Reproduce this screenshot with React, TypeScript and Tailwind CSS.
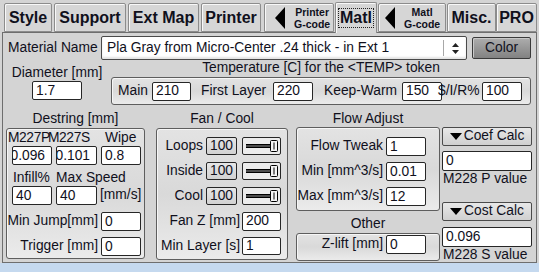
import React from "react";

const boxCls =
  "rounded-[3px] border border-[#5e5e5e] bg-linear-to-b from-[#e3e3e3] via-[#d9d9d9] to-[#ebebeb] shadow-[inset_1px_1px_0_#f6f6f6]";

function Field({ className = "", children, clip = false }: { className?: string; children: React.ReactNode; clip?: boolean }) {
  return (
    <div
      className={`flex shrink-0 items-center overflow-hidden rounded-[2px] border border-[#262626] bg-white ${
        clip ? "justify-end pr-[6px]" : "pl-[3px]"
      } ${className}`}
    >
      <span className="whitespace-nowrap leading-none">{children}</span>
    </div>
  );
}

function LeftTri() {
  return (
    <svg width="10" height="22" viewBox="0 0 10 22" className="shrink-0">
      <polygon points="10,0 10,22 0,11" fill="#000" />
    </svg>
  );
}

function Tab({ className = "", children, selected = false }: { className?: string; children: React.ReactNode; selected?: boolean }) {
  return (
    <div
      className={`flex shrink-0 items-center justify-center rounded-t-[2px] border border-[#8c8c8c] bg-[#d6d6d6] shadow-[inset_1px_1px_0_#f8f8f8] ${
        selected ? "relative z-10 mb-[-1px] h-[31px] border-b-0 border-[#6e6e6e] bg-[#d4d4d4]" : "h-[29px]"
      } ${className}`}
    >
      {children}
    </div>
  );
}

function Slider() {
  return (
    <div className="flex h-[18px] w-[39px] shrink-0 items-center rounded-[2px] border border-[#262626] bg-[#ececec]">
      <svg width="37" height="16" viewBox="0 0 37 16">
        <rect x="3" y="6" width="25" height="4" fill="#000" />
        <rect x="3" y="7.5" width="25" height="1" fill="#9a9a9a" />
        <rect x="27.5" y="2.5" width="7" height="11" rx="1" fill="#f4f4f4" stroke="#000" />
        <rect x="30.5" y="4.5" width="1" height="7" fill="#000" />
      </svg>
    </div>
  );
}

function Hundred() {
  return (
    <div className="flex h-[18px] w-[31px] shrink-0 items-center justify-center rounded-[2px] border border-[#262626] bg-linear-to-b from-[#e6e6e6] to-[#d2d2d2] leading-none">
      100
    </div>
  );
}

function DownTri() {
  return (
    <svg width="12" height="7" viewBox="0 0 12 7" className="mr-[2px] shrink-0">
      <polygon points="0,0 12,0 6,7" fill="#000" />
    </svg>
  );
}

export default function App() {
  return (
    <div className="flex h-[272px] w-[539px] flex-col overflow-hidden bg-[#d4d4d4] font-['Liberation_Sans',Arial,sans-serif] text-[13.8px] text-[#10101c]">
      {/* Tabs */}
      <div className="flex h-[32px] shrink-0 items-end text-[16px] font-bold">
        <Tab className="ml-[4px] w-[48px]">Style</Tab>
        <Tab className="ml-[2px] w-[72px]">Support</Tab>
        <Tab className="ml-[2px] w-[71px]">Ext Map</Tab>
        <Tab className="ml-[2px] w-[60px]">Printer</Tab>
        <Tab className="ml-[3px] w-[70px] justify-start pl-[10px]">
          <LeftTri />
          <div className="ml-[9px] flex flex-col items-center text-[10.5px] leading-[12px]">
            <span>Printer</span>
            <span>G-code</span>
          </div>
        </Tab>
        <Tab selected className="ml-[1px] w-[42px]">
          <span className="border border-dotted border-[#222] px-[1px] leading-[18px]">Matl</span>
        </Tab>
        <Tab className="ml-[1px] w-[68px] justify-start pl-[6px]">
          <LeftTri />
          <div className="ml-[9px] flex flex-col items-center text-[10.5px] leading-[12px]">
            <span>Matl</span>
            <span>G-code</span>
          </div>
        </Tab>
        <Tab className="ml-[1px] w-[49px]">Misc.</Tab>
        <Tab className="w-[41px]">PRO</Tab>
      </div>

      {/* Panel */}
      <div className="ml-[2px] flex h-[231px] w-[535px] shrink-0 flex-col border border-[#6e6e6e] bg-[#d4d4d4]">
        {/* Row 1 */}
        <div className="mt-[3px] flex h-[24px] items-center">
          <div className="w-[98px] shrink-0 pl-[5px] whitespace-nowrap">Material Name</div>
          <div className="flex h-[24px] w-[366px] shrink-0 items-center rounded-[2px] border border-[#4a4a4a] bg-white shadow-[inset_0_-2px_2px_#e4e4e4]">
            <div className="flex-1 pl-[5px] whitespace-nowrap">Pla Gray from Micro-Center .24 thick - in Ext 1</div>
            <div className="h-[16px] w-[1px] bg-[#a8a8a8]" />
            <div className="flex w-[22px] justify-center">
              <svg width="7" height="11" viewBox="0 0 7 11">
                <polygon points="3.5,0 7,4 0,4" fill="#222" />
                <polygon points="0,7 7,7 3.5,11" fill="#222" />
              </svg>
            </div>
          </div>
          <div className="ml-[5px] flex h-[22px] w-[59px] shrink-0 items-center justify-center rounded-[2px] border border-[#3a3a3a] bg-linear-to-b from-[#adadad] to-[#828282] shadow-[inset_1px_1px_0_#c8c8c8]">
            Color
          </div>
        </div>

        {/* Row 2 */}
        <div className="flex h-[45px]">
          <div className="flex w-[108px] shrink-0 flex-col items-center pt-[5px]">
            <div className="h-[16px] leading-[16px] whitespace-nowrap">Diameter [mm]</div>
            <Field className="h-[19px] w-[50px]">1.7</Field>
          </div>
          <div className="flex w-[420px] shrink-0 flex-col">
            <div className="h-[16px] text-center leading-[16px] whitespace-nowrap">Temperature [C] for the &lt;TEMP&gt; token</div>
            <div className={`mt-[1px] flex h-[28px] items-center pl-[6px] ${boxCls}`}>
              <span className="w-[34px] shrink-0">Main</span>
              <Field className="h-[19px] w-[39px]">210</Field>
              <span className="ml-[10px] w-[72px] shrink-0 whitespace-nowrap">First Layer</span>
              <Field className="h-[19px] w-[40px]">220</Field>
              <span className="ml-[11px] w-[78px] shrink-0 whitespace-nowrap">Keep-Warm</span>
              <Field className="h-[19px] w-[40px]">150</Field>
              <span className="relative ml-[-4px] w-[44px] shrink-0 whitespace-nowrap">$/I/R%</span>
              <Field className="h-[19px] w-[40px]">100</Field>
            </div>
          </div>
        </div>

        {/* Row 3 */}
        <div className="flex flex-1">
          {/* Destring */}
          <div className="ml-[3px] flex w-[139px] shrink-0 flex-col">
            <div className="mt-[6px] h-[16px] text-center leading-[16px]">Destring [mm]</div>
            <div className={`mt-[1px] flex h-[131px] flex-col ${boxCls}`}>
              <div className="mt-[1px] flex h-[16px] items-center whitespace-nowrap">
                <span className="ml-[1px] w-[40px] shrink-0 tracking-[-0.4px]">M227P</span>
                <span className="w-[57px] shrink-0 tracking-[-0.4px]">M227S</span>
                <span>Wipe</span>
              </div>
              <div className="flex h-[19px]">
                <Field clip className="ml-[5px] h-[19px] w-[40px]">0.096</Field>
                <Field clip className="ml-[4px] h-[19px] w-[41px]">0.101</Field>
                <Field className="ml-[4px] h-[19px] w-[40px]">0.8</Field>
              </div>
              <div className="mt-[5px] flex h-[16px] items-center whitespace-nowrap">
                <span className="ml-[6px] w-[43px] shrink-0">Infill%</span>
                <span>Max Speed</span>
              </div>
              <div className="flex h-[19px] items-center">
                <Field className="ml-[5px] h-[19px] w-[40px]">40</Field>
                <Field className="ml-[4px] h-[19px] w-[41px]">40</Field>
                <span className="ml-[3px] whitespace-nowrap">[mm/s]</span>
              </div>
              <div className="mt-[7px] flex h-[19px] items-center justify-end pr-[3px]">
                <span className="whitespace-nowrap">Min Jump[mm]</span>
                <Field className="ml-[3px] h-[19px] w-[40px]">0</Field>
              </div>
              <div className="mt-[6px] flex h-[19px] items-center justify-end pr-[3px]">
                <span className="whitespace-nowrap">Trigger [mm]</span>
                <Field className="ml-[3px] h-[19px] w-[40px]">0</Field>
              </div>
            </div>
          </div>

          {/* Fan / Cool */}
          <div className="ml-[11px] flex w-[132px] shrink-0 flex-col">
            <div className="mt-[6px] h-[16px] text-center leading-[16px]">Fan / Cool</div>
            <div className={`mt-[1px] flex h-[132px] flex-col ${boxCls}`}>
              {["Loops", "Inside", "Cool"].map((l, i) => (
                <div key={l} className={`flex h-[18px] items-center justify-end pr-[6px] ${i === 0 ? "mt-[8px]" : "mt-[7px]"}`}>
                  <span className="whitespace-nowrap">{l}</span>
                  <div className="ml-[3px]">
                    <Hundred />
                  </div>
                  <div className="ml-[5px]">
                    <Slider />
                  </div>
                </div>
              ))}
              <div className="mt-[7px] flex h-[18px] items-center justify-end pr-[6px]">
                <span className="whitespace-nowrap">Fan Z [mm]</span>
                <Field className="ml-[2px] h-[19px] w-[39px]">200</Field>
              </div>
              <div className="mt-[7px] flex h-[18px] items-center justify-end pr-[6px]">
                <span className="whitespace-nowrap">Min Layer [s]</span>
                <Field className="ml-[2px] h-[18px] w-[39px]">1</Field>
              </div>
            </div>
          </div>

          {/* Flow Adjust / Other */}
          <div className="ml-[8px] flex w-[144px] shrink-0 flex-col">
            <div className="mt-[6px] h-[16px] text-center leading-[16px]">Flow Adjust</div>
            <div className={`flex h-[84px] flex-col ${boxCls}`}>
              <div className="mt-[9px] flex h-[19px] items-center justify-end pr-[13px]">
                <span className="whitespace-nowrap">Flow Tweak</span>
                <Field className="ml-[3px] h-[19px] w-[40px]">1</Field>
              </div>
              <div className="mt-[6px] flex h-[19px] items-center justify-end pr-[13px]">
                <span className="whitespace-nowrap">Min [mm^3/s]</span>
                <Field className="ml-[3px] h-[19px] w-[40px]">0.01</Field>
              </div>
              <div className="mt-[6px] flex h-[19px] items-center justify-end pr-[13px]">
                <span className="whitespace-nowrap">Max [mm^3/s]</span>
                <Field className="ml-[3px] h-[19px] w-[40px]">12</Field>
              </div>
            </div>
            <div className="mt-[5px] h-[16px] text-center leading-[16px]">Other</div>
            <div className={`mt-[1px] flex h-[28px] flex-col ${boxCls}`}>
              <div className="mt-[1px] flex h-[19px] items-center justify-end pr-[13px]">
                <span className="whitespace-nowrap">Z-lift [mm]</span>
                <Field className="ml-[3px] h-[19px] w-[40px]">0</Field>
              </div>
            </div>
          </div>

          {/* Right column */}
          <div className="ml-[2px] flex w-[90px] shrink-0 flex-col">
            <div className="mt-[22px] flex h-[19px] items-center justify-center rounded-[2px] border border-[#4a4a4a] bg-linear-to-b from-[#e8e8e8] to-[#d0d0d0] whitespace-nowrap">
              <DownTri />
              Coef Calc
            </div>
            <Field className="mt-[5px] h-[20px] w-[90px]">0</Field>
            <div className="h-[16px] pl-[1px] leading-[16px] whitespace-nowrap">M228 P value</div>
            <div className="mt-[15px] flex h-[19px] items-center justify-center rounded-[2px] border border-[#4a4a4a] bg-linear-to-b from-[#e8e8e8] to-[#d0d0d0] whitespace-nowrap">
              <DownTri />
              Cost Calc
            </div>
            <Field className="mt-[6px] h-[20px] w-[90px]">0.096</Field>
            <div className="h-[16px] pl-[1px] leading-[16px] whitespace-nowrap">M228 S value</div>
          </div>
        </div>
      </div>

      <div className="flex-1 bg-[#c5d9ef]" />
    </div>
  );
}
